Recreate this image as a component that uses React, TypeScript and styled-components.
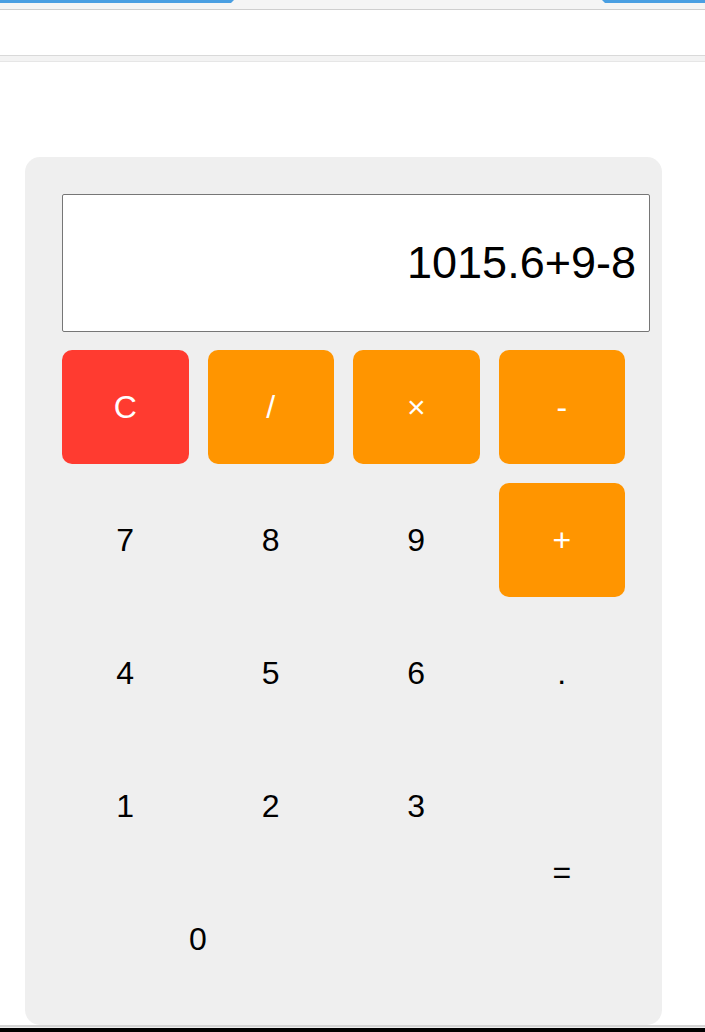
import React from "react";
import styled, { createGlobalStyle, css } from "styled-components";

const GlobalStyle = createGlobalStyle`
  html, body {
    margin: 0;
    padding: 0;
    background: #ffffff;
    font-family: "Liberation Sans", Arial, sans-serif;
  }
  * { box-sizing: border-box; }
`;

const Page = styled.div`
  display: flex;
  flex-direction: column;
  height: 1032px;
  overflow: hidden;
`;

const TabStrip = styled.div`
  height: 10px;
  flex: none;
  background: #f5f5f5;
  border-bottom: 1px solid #cfcfcf;
  display: flex;
  justify-content: space-between;
  align-items: flex-start;
`;

const TabBar = styled.div<{ $width: number; $side: "left" | "right" }>`
  width: ${(p) => p.$width}px;
  height: 3px;
  background: #4a9fe2;
  clip-path: ${(p) =>
    p.$side === "left"
      ? "polygon(0 0, 100% 0, calc(100% - 3px) 100%, 0 100%)"
      : "polygon(0 0, 100% 0, 100% 100%, 3px 100%)"};
`;

const AddressArea = styled.div`
  height: 45px;
  flex: none;
  background: #ffffff;
`;

const Divider = styled.div`
  height: 7px;
  flex: none;
  background: #f3f3f3;
  border-top: 1px solid #d9d9d9;
  border-bottom: 1px solid #e6e6e6;
`;

const Main = styled.main`
  flex: 1;
  min-height: 0;
  padding: 95px 0 0 25px;
  overflow: hidden;
  display: flex;
  align-items: flex-start;
`;

const Card = styled.div`
  width: 637px;
  background: #efefef;
  border-radius: 15px;
  padding: 37px 37px 29px;
`;

const Display = styled.input`
  display: block;
  width: calc(100% + 25px);
  height: 138px;
  margin: 0 0 18px;
  padding: 0 13px 0 12px;
  border: 1px solid #767676;
  border-radius: 2px;
  background: #ffffff;
  color: #000000;
  font-family: "Liberation Sans", Arial, sans-serif;
  font-size: 45px;
  text-align: right;
  outline: none;
`;

const Keypad = styled.div`
  display: grid;
  grid-template-columns: repeat(4, 1fr);
  grid-auto-rows: 114px;
  gap: 19px;
`;

type Variant = "clear" | "op" | "plain";

const Key = styled.button<{ $variant: Variant; $col?: number; $row?: number }>`
  border: none;
  border-radius: 10px;
  font-family: "Liberation Sans", Arial, sans-serif;
  font-size: 32px;
  display: flex;
  align-items: center;
  justify-content: center;
  padding: 0;
  cursor: pointer;
  ${(p) => p.$col && css`grid-column: span ${p.$col};`}
  ${(p) => p.$row && css`grid-row: span ${p.$row};`}
  ${(p) =>
    p.$variant === "clear"
      ? css`
          background: #ff3b30;
          color: #ffffff;
        `
      : p.$variant === "op"
      ? css`
          background: #ff9500;
          color: #ffffff;
        `
      : css`
          background: transparent;
          color: #000000;
        `}
`;

const BottomBar = styled.div`
  height: 7px;
  flex: none;
  border-top: 2px solid #d4d4d4;
  border-bottom: 4px solid #000000;
  background: #eeeeee;
`;

type KeyDef = { label: string; variant: Variant; col?: number; row?: number };

const keys: KeyDef[] = [
  { label: "C", variant: "clear" },
  { label: "/", variant: "op" },
  { label: "×", variant: "op" },
  { label: "-", variant: "op" },
  { label: "7", variant: "plain" },
  { label: "8", variant: "plain" },
  { label: "9", variant: "plain" },
  { label: "+", variant: "op" },
  { label: "4", variant: "plain" },
  { label: "5", variant: "plain" },
  { label: "6", variant: "plain" },
  { label: ".", variant: "plain" },
  { label: "1", variant: "plain" },
  { label: "2", variant: "plain" },
  { label: "3", variant: "plain" },
  { label: "=", variant: "plain", row: 2 },
  { label: "0", variant: "plain", col: 2 },
];

export default function App() {
  return (
    <>
      <GlobalStyle />
      <Page>
        <TabStrip>
          <TabBar $width={234} $side="left" />
          <TabBar $width={103} $side="right" />
        </TabStrip>
        <AddressArea />
        <Divider />
        <Main>
          <Card>
            <Display readOnly value="1015.6+9-8" />
            <Keypad>
              {keys.map((k) => (
                <Key key={k.label} $variant={k.variant} $col={k.col} $row={k.row}>
                  {k.label}
                </Key>
              ))}
            </Keypad>
          </Card>
        </Main>
        <BottomBar />
      </Page>
    </>
  );
}
